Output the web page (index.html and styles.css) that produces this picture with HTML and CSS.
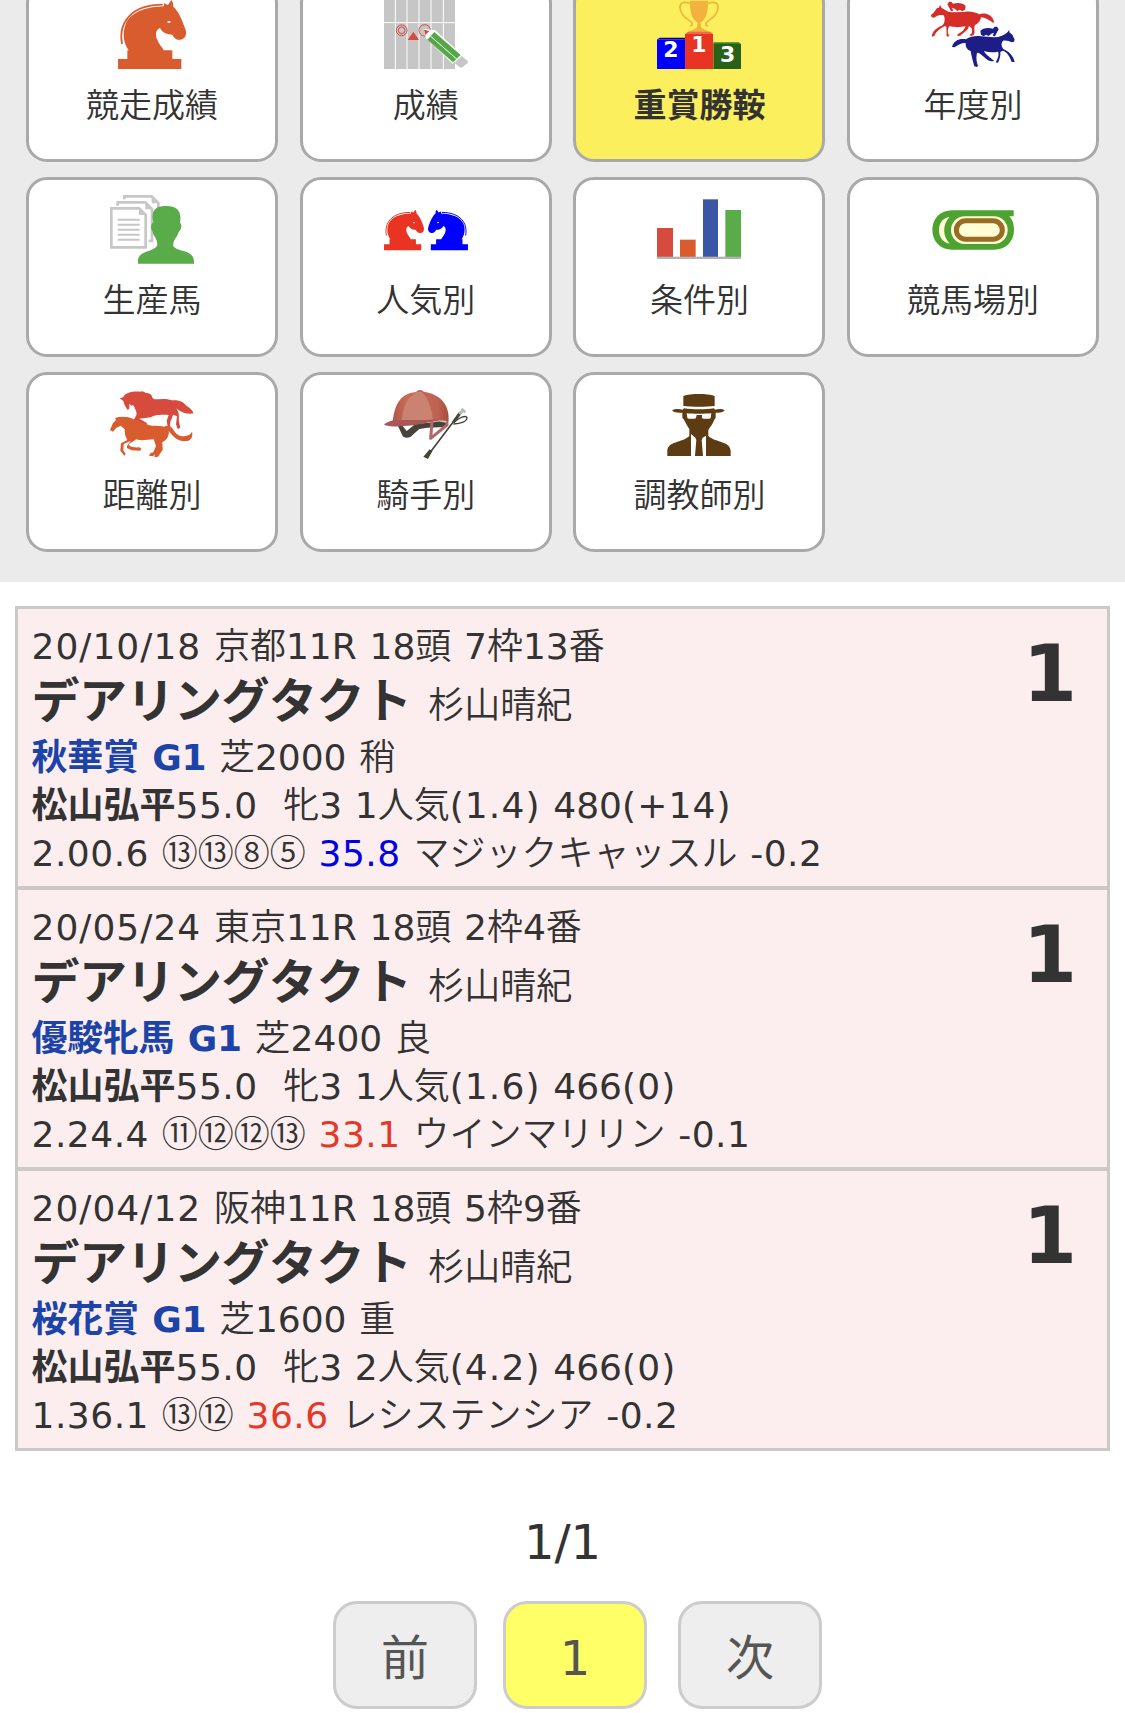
FILE: index.html
```html
<!DOCTYPE html>
<html lang="ja">
<head>
    <meta charset="UTF-8">
    <meta name="viewport" content="width=device-width, initial-scale=1.0">
    <title>重賞勝鞍</title>
    <link rel="stylesheet" href="styles.css">
</head>
<body>
    <svg width="0" height="0" class="defs">
        <symbol id="knight" viewBox="0 0 252 216" overflow="visible">
            <path d="M24 177H52V151H56C40 128 37 100 46 75C58 38 108 20 162 19L162 10L174 15L184 0L189 8L190 20C205 34 215 55 227 90C231 105 225 117 212 119C198 121 192 113 187 104C172 103 158 100 150 84C138 88 134 105 142 120C147 133 157 142 161 151H187V177H214V207H24Z" fill="currentColor"/>
            <path d="M36 132C24 70 62 14 158 14" fill="none" stroke="currentColor" stroke-width="5"/>
            <ellipse cx="177" cy="66" rx="5" ry="3" fill="#fff"/>
        </symbol>
    </svg>

    <nav class="menu">
        <a class="menu-item">
            <svg class="icon" viewBox="0 -9 252 216" color="#d95c2f"><use href="#knight" width="252" height="216"/></svg>
            <span>競走成績</span>
        </a>
        <a class="menu-item">
            <svg class="icon" viewBox="0 -9 252 216">
                <rect x="0" y="-40" width="213" height="247" fill="#c6c6c6"/>
                <path d="M34 -40V207M69 -40V207M105 -40V207M141 -40V207M178 -40V207M0 68H213" stroke="#fff" stroke-width="3"/>
                <g fill="none" stroke="#d54b40" stroke-width="3"><circle cx="53" cy="91" r="16"/><circle cx="53" cy="91" r="10"/><circle cx="122" cy="91" r="17"/></g>
                <path d="M88 95L105 120H71Z" fill="#d54b40"/>
                <path d="M119 88L153 90L234 164L206 191L126 115Z" fill="#fff"/>
                <path d="M120 89L136 93L124 105Z" fill="#d54b40"/>
                <path d="M151 96L230 165L207 187L130 119Z" fill="#56a846"/>
                <path d="M139 108L218 177" stroke="#fff" stroke-width="3"/>
                <path d="M233 168L251 183Q253 187 250 190L235 202Q230 204 226 201L211 188Z" fill="#c6c6c6"/>
            </svg>
            <span>成績</span>
        </a>
        <a class="menu-item active">
            <svg class="icon" viewBox="0 -9 252 216">
                <path d="M98 2H154C153 35 147 60 131 67V79C133 87 147 90 161 97H91C105 90 119 87 121 79V67C105 60 99 35 98 2Z" fill="#f1b33e"/>
                <path d="M98 10C78 3 68 10 69 24C71 48 91 57 101 65C108 71 107 79 99 77M154 10C174 3 184 10 183 24C181 48 161 57 151 65C144 71 145 79 153 77" fill="none" stroke="#f1b33e" stroke-width="5"/>
                <path d="M9 113H84V118H0Z" fill="#000089"/>
                <path d="M0 118H84V207H0Z" fill="#00f"/>
                <path d="M93 95H160L168 103H84Z" fill="#f06a4d"/>
                <path d="M84 102H168V207H84Z" fill="#e93323"/>
                <path d="M169 127H245L252 132H169Z" fill="#3b8132"/>
                <path d="M169 132H252V207H169Z" fill="#2a6118"/>
                <g class="podium-num"><text x="42" y="170">2</text><text x="126" y="155">1</text><text x="212" y="186">3</text></g>
            </svg>
            <span>重賞勝鞍</span>
        </a>
        <a class="menu-item">
            <svg class="icon" viewBox="0 -9 252 216">
                <g fill="#d52d27">
                    <path d="M0 45L9 37L18 24L24 23L27 14L32 24C40 28 46 34 60 37L100 36C115 33 130 36 145 43C160 37 184 43 189 65L187 69C174 60 162 53 150 52C149 62 143 70 132 75C127 86 134 96 128 105L121 108L115 105L123 100V86L114 77C113 90 97 97 88 107L79 108L80 103C93 97 100 88 104 79C90 82 70 83 56 78C49 86 49 98 55 108L47 110L46 80L41 78C30 86 17 90 10 108L2 110C5 92 16 84 35 76C43 66 42 54 38 46C26 43 17 48 9 53L2 52Z"/>
                    <path id="jockey" d="M49 13L54 5L61 5L66 11C82 6 98 10 104 18L102 29L94 34L87 29L79 33L71 26L63 23L67 32L60 34L54 22Z"/>
                </g>
                <g fill="#1c1d86">
                    <path d="M251 119L244 104L235 97L235 89L228 98C218 106 205 112 190 112L150 109C135 107 118 109 105 118C88 114 68 120 63 141L70 142C82 134 93 128 104 129C103 140 108 150 119 153C121 165 125 182 130 199L138 201L141 197C136 185 135 172 138 158C153 158 160 180 182 184L190 183C178 172 164 165 159 153C173 158 188 158 201 155C206 165 198 180 194 187L201 188C206 178 209 168 208 156L215 152C228 156 236 168 242 186L251 186L248 176C242 166 235 155 218 148C210 138 210 130 216 122C228 120 236 124 242 127L249 125Z"/>
                    <use href="#jockey" transform="translate(252 75) scale(-1 1)"/>
                </g>
            </svg>
            <span>年度別</span>
        </a>
        <a class="menu-item">
            <svg class="icon" viewBox="0 0 252 216">
                <g fill="none" stroke="#c7c7c7" stroke-width="8">
                    <path d="M43 22V13H125L145 33V60"/>
                    <path d="M23 41V31H106L126 51V147H116"/>
                    <path d="M4 49H87L107 69V166H4Z"/>
                    <path d="M23 83H89M23 98H89M23 113H89M23 128H89M23 143H89" stroke-width="6"/>
                </g>
                <path d="M87 46L110 69H87ZM106 28L130 52H106ZM125 10L149 34H125Z" fill="#c7c7c7"/>
                <path d="M130 91C120 51 142 42 168 42C197 41 217 55 210 92C218 99 213 115 206 120C202 137 188 142 190 163C203 181 249 172 252 207V215H84V207C83 176 130 180 141 162C145 142 132 137 128 120C121 110 122 96 130 91Z" fill="#5aab49"/>
            </svg>
            <span>生産馬</span>
        </a>
        <a class="menu-item">
            <svg class="icon" viewBox="0 0 252 216">
                <g color="#e93323" transform="translate(-14 53) scale(.587)"><use href="#knight" width="252" height="216"/></g>
                <g color="#00f" transform="translate(266 53) scale(-.587 .587)"><use href="#knight" width="252" height="216"/></g>
            </svg>
            <span>人気別</span>
        </a>
        <a class="menu-item">
            <svg class="icon" viewBox="0 0 252 216">
                <rect x="0" y="108" width="48" height="87" fill="#d64b3e"/>
                <rect x="69" y="143" width="47" height="52" fill="#d95c2f"/>
                <rect x="138" y="22" width="45" height="173" fill="#3957a4"/>
                <rect x="205" y="54" width="47" height="141" fill="#5aab49"/>
                <rect x="0" y="194" width="252" height="7" fill="#b3b3b3"/>
            </svg>
            <span>条件別</span>
        </a>
        <a class="menu-item">
            <svg class="icon" viewBox="0 0 252 216">
                <path d="M63 55H248V73H235C245 83 249 97 249 114C249 149 224 173 190 173H63C28 173 4 148 4 114C4 80 28 55 63 55Z" fill="#4da32f"/>
                <path d="M56 74C32 79 24 96 24 114C24 132 32 151 56 155C34 131 34 98 56 74Z" fill="#fffdd6"/>
                <rect x="60" y="73" width="170" height="83" rx="41" fill="#fffdd6"/>
                <rect x="76" y="86" width="138" height="56" rx="28" fill="#fffdd6" stroke="#9a6b23" stroke-width="15"/>
            </svg>
            <span>競馬場別</span>
        </a>
        <a class="menu-item">
            <svg class="icon" viewBox="0 0 252 216">
                <path d="M29 34L39 31C45 18 65 12 93 14C96 11 102 14 107 18C122 18 127 26 126 31L132 37C149 37 167 33 185 40C202 38 220 43 229 56C237 60 245 66 251 79C238 83 215 79 199 64C211 82 205 93 207 104L211 122L203 126L198 112L201 88L189 83C186 99 175 106 183 124L174 122L170 102L176 84C158 82 132 83 122 91L88 95L112 109L104 114L78 108L71 99L79 85C83 73 70 58 70 54L65 56L58 50V66L52 68L44 54L40 42Z" fill="#d64b3e"/>
                <path d="M0 129L9 108L18 99L15 93C36 86 61 90 73 98L91 101L88 105L111 112C123 119 145 115 163 119C172 113 184 119 190 128C199 144 214 150 226 147C236 146 243 141 246 134C250 148 243 160 231 162C207 165 188 150 176 131C179 143 171 160 157 165L158 188L144 209L133 211L135 202L129 208L117 206L122 198L130 196L138 177L131 157C111 158 95 163 79 157L56 172C58 181 75 182 88 181L95 186L90 191L65 190L51 183C50 173 59 168 62 162L41 171L40 190L47 201L43 206L31 191L33 169L52 159L45 144L44 127L32 116L18 123L9 134Z" fill="#d95c2f"/>
            </svg>
            <span>距離別</span>
        </a>
        <a class="menu-item">
            <svg class="icon" viewBox="0 0 252 216">
                <defs>
                    <linearGradient id="cap" x2="1"><stop stop-color="#b45446"/><stop offset=".25" stop-color="#c96b59"/><stop offset=".8" stop-color="#bd6350"/><stop offset="1" stop-color="#a9493d"/></linearGradient>
                </defs>
                <path d="M42 117H56L68 132L94 111L150 106L192 99L187 120L130 122L106 126L80 149C71 154 60 153 56 147Z" fill="#464438"/>
                <path d="M144 104L140 154L189 114V101" fill="none" stroke="#b0696b" stroke-width="9" stroke-linejoin="round"/>
                <path d="M168 100L186 104" stroke="#ccc" stroke-width="7"/>
                <path d="M26 105C31 57 47 19 96 15C101 7 114 7 119 14C168 20 197 53 194 101L145 100L110 107Z" fill="url(#cap)"/>
                <path d="M53 100C56 64 68 31 98 15H112C133 30 143 66 147 99Z" fill="#c98370"/>
                <path d="M0 112C14 103 24 98 42 99L130 99C148 96 163 97 168 103C134 102 104 116 69 116C34 119 7 120 0 112Z" fill="#a95657"/>
                <path d="M225 82L140 194" stroke="#464438" stroke-width="5"/>
                <path d="M208 106L229 77" stroke="#464438" stroke-width="9"/>
                <path d="M226 81L237 69M232 65L244 76" stroke="#b9b9b9" stroke-width="8"/>
                <path d="M211 105C227 91 244 84 249 92C250 103 231 110 208 111" fill="none" stroke="#464438" stroke-width="4"/>
                <path d="M137 187L145 193L132 216L118 209Z" fill="#464438"/>
            </svg>
            <span>騎手別</span>
        </a>
        <a class="menu-item">
            <svg class="icon" viewBox="0 0 252 216">
                <g fill="#5d3b13">
                    <path d="M79 27C102 19 150 19 173 27V57C150 60 102 60 79 57Z"/>
                    <path d="M81 64C106 68 146 68 171 64L174 68C184 65 196 65 203 70C197 78 185 78 176 77V92L172 98C167 113 158 121 154 129V147C178 168 221 162 221 193V207H147V146L137 152L134 159L138 207H114L118 159L115 152L102 141V207H31V193C31 162 75 168 97 147V126C90 117 85 105 80 97L76 92V77C65 78 51 78 45 70C54 65 66 65 77 68Z"/>
                </g>
                <path d="M89 79C104 81 148 81 163 79L161 93Q160 95 156 95H140Q136 95 135 92V84H119L117 92Q116 95 112 95H96Q92 95 91 92Z" fill="#fff"/>
            </svg>
            <span>調教師別</span>
        </a>
    </nav>

    <div class="race-list">
        <div class="race">
            <div class="race-info">
                <p><span class="date">20/10/18</span> 京都11R 18頭 7枠13番</p>
                <p class="name"><b>デアリングタクト</b> 杉山晴紀</p>
                <p><a>秋華賞 G1</a> 芝2000 稍</p>
                <p><b>松山弘平</b><span class="num">55.0</span>&nbsp; 牝3 1人気<span class="paren">(1.4)</span> 480<span class="paren">(+14)</span></p>
                <p><span class="num">2.00.6</span> <span class="pass">⑬⑬⑧⑤</span> <span class="num blue">35.8</span> マジックキャッスル <span class="num">-0.2</span></p>
            </div>
            <div class="rank">1</div>
        </div>
        <div class="race">
            <div class="race-info">
                <p><span class="date">20/05/24</span> 東京11R 18頭 2枠4番</p>
                <p class="name"><b>デアリングタクト</b> 杉山晴紀</p>
                <p><a>優駿牝馬 G1</a> 芝2400 良</p>
                <p><b>松山弘平</b><span class="num">55.0</span>&nbsp; 牝3 1人気<span class="paren">(1.6)</span> 466<span class="paren">(0)</span></p>
                <p><span class="num">2.24.4</span> <span class="pass">⑪⑫⑫⑬</span> <span class="num red">33.1</span> ウインマリリン <span class="num">-0.1</span></p>
            </div>
            <div class="rank">1</div>
        </div>
        <div class="race">
            <div class="race-info">
                <p><span class="date">20/04/12</span> 阪神11R 18頭 5枠9番</p>
                <p class="name"><b>デアリングタクト</b> 杉山晴紀</p>
                <p><a>桜花賞 G1</a> 芝1600 重</p>
                <p><b>松山弘平</b><span class="num">55.0</span>&nbsp; 牝3 2人気<span class="paren">(4.2)</span> 466<span class="paren">(0)</span></p>
                <p><span class="num">1.36.1</span> <span class="pass">⑬⑫</span> <span class="num red">36.6</span> レシステンシア <span class="num">-0.2</span></p>
            </div>
            <div class="rank">1</div>
        </div>
    </div>

    <div class="page-count">1/1</div>
    <div class="pager">
        <a class="page-btn">前</a>
        <a class="page-btn current">1</a>
        <a class="page-btn next">次</a>
    </div>
</body>
</html>
```

FILE: styles.css
```css
* {
    box-sizing: border-box;
}

body {
    margin: 0;
    height: 1713px;
    overflow: hidden;
    background: #fff;
    color: #333;
    font-family: "DejaVu Sans", "Noto Sans CJK JP", sans-serif;
    font-size: 36px;
}

.defs {
    display: block;
}

/* メニュー */
.menu {
    display: grid;
    grid-template-columns: repeat(4, 252px);
    grid-auto-rows: 180px;
    gap: 15px 21.7px;
    margin-top: -18px;
    padding: 0 26px 30px;
    background: #ebebeb;
}

.menu-item {
    display: flex;
    flex-direction: column;
    align-items: center;
    padding-top: 12px;
    border: 3px solid #a9a9a9;
    border-radius: 21px;
    background: #fff;
    font-family: "Noto Sans CJK JP", sans-serif;
    font-size: 33px;
    font-weight: 350;
    line-height: 48px;
}

.menu-item.active {
    background: #fbef5d;
    font-weight: bold;
}

.menu-item span {
    margin-top: 10px;
}

.icon {
    display: block;
    width: 84px;
    height: 72px;
    overflow: visible;
}

.podium-num {
    fill: #fff;
    font-family: "DejaVu Sans", sans-serif;
    font-size: 66px;
    font-weight: bold;
    text-anchor: middle;
}

/* レース一覧 */
.race-list {
    display: flex;
    flex-direction: column;
    gap: 4px;
    margin: 24px 15px 0;
    border: 3px solid #cac9c8;
    background: #cac9c8;
}

.race {
    display: flex;
    justify-content: space-between;
    height: 277px;
    padding: 14px 0 0 13.5px;
    background: #fceeee;
}

.race p {
    height: 48px;
    margin: 0;
    font-family: "DejaVu Sans", "Noto Sans CJK JP DemiLight", "Noto Sans CJK JP", sans-serif;
    line-height: 48px;
    white-space: nowrap;
    word-spacing: 1.3px;
}

.race b,
.race a {
    font-family: "DejaVu Sans", "Noto Sans CJK JP", sans-serif;
    font-weight: bold;
}

.race .name {
    height: 63px;
    line-height: 60px;
}

.name b {
    margin-right: 4px;
    font-size: 48px;
    letter-spacing: -.5px;
}

.race a {
    color: #1c44a8;
    letter-spacing: -.3px;
}

.date {
    letter-spacing: 1px;
}

.num {
    letter-spacing: .5px;
}

.paren {
    letter-spacing: 1.1px;
}

.pass {
    font-family: "Noto Sans CJK JP DemiLight", "Noto Sans CJK JP", sans-serif;
    line-height: 1;
}

.blue {
    color: #0000e6;
}

.red {
    color: #e4382b;
}

.rank {
    width: 114px;
    padding-top: 3px;
    font-size: 78px;
    font-weight: bold;
    line-height: 96px;
    text-align: center;
}

/* ページ送り */
.page-count {
    margin-top: 61px;
    font-size: 48px;
    line-height: 60px;
    text-align: center;
}

.pager {
    display: flex;
    gap: 26px;
    margin-top: 29px;
    padding-left: 333px;
}

.page-btn {
    width: 144px;
    height: 108px;
    padding-top: 3px;
    border: 3px solid #ccc;
    border-radius: 24px;
    background: #eee;
    color: #555;
    font-size: 48px;
    line-height: 102px;
    text-align: center;
}

.page-btn.current {
    background: #ffff66;
}

.page-btn.next {
    margin-left: 5px;
}
```
